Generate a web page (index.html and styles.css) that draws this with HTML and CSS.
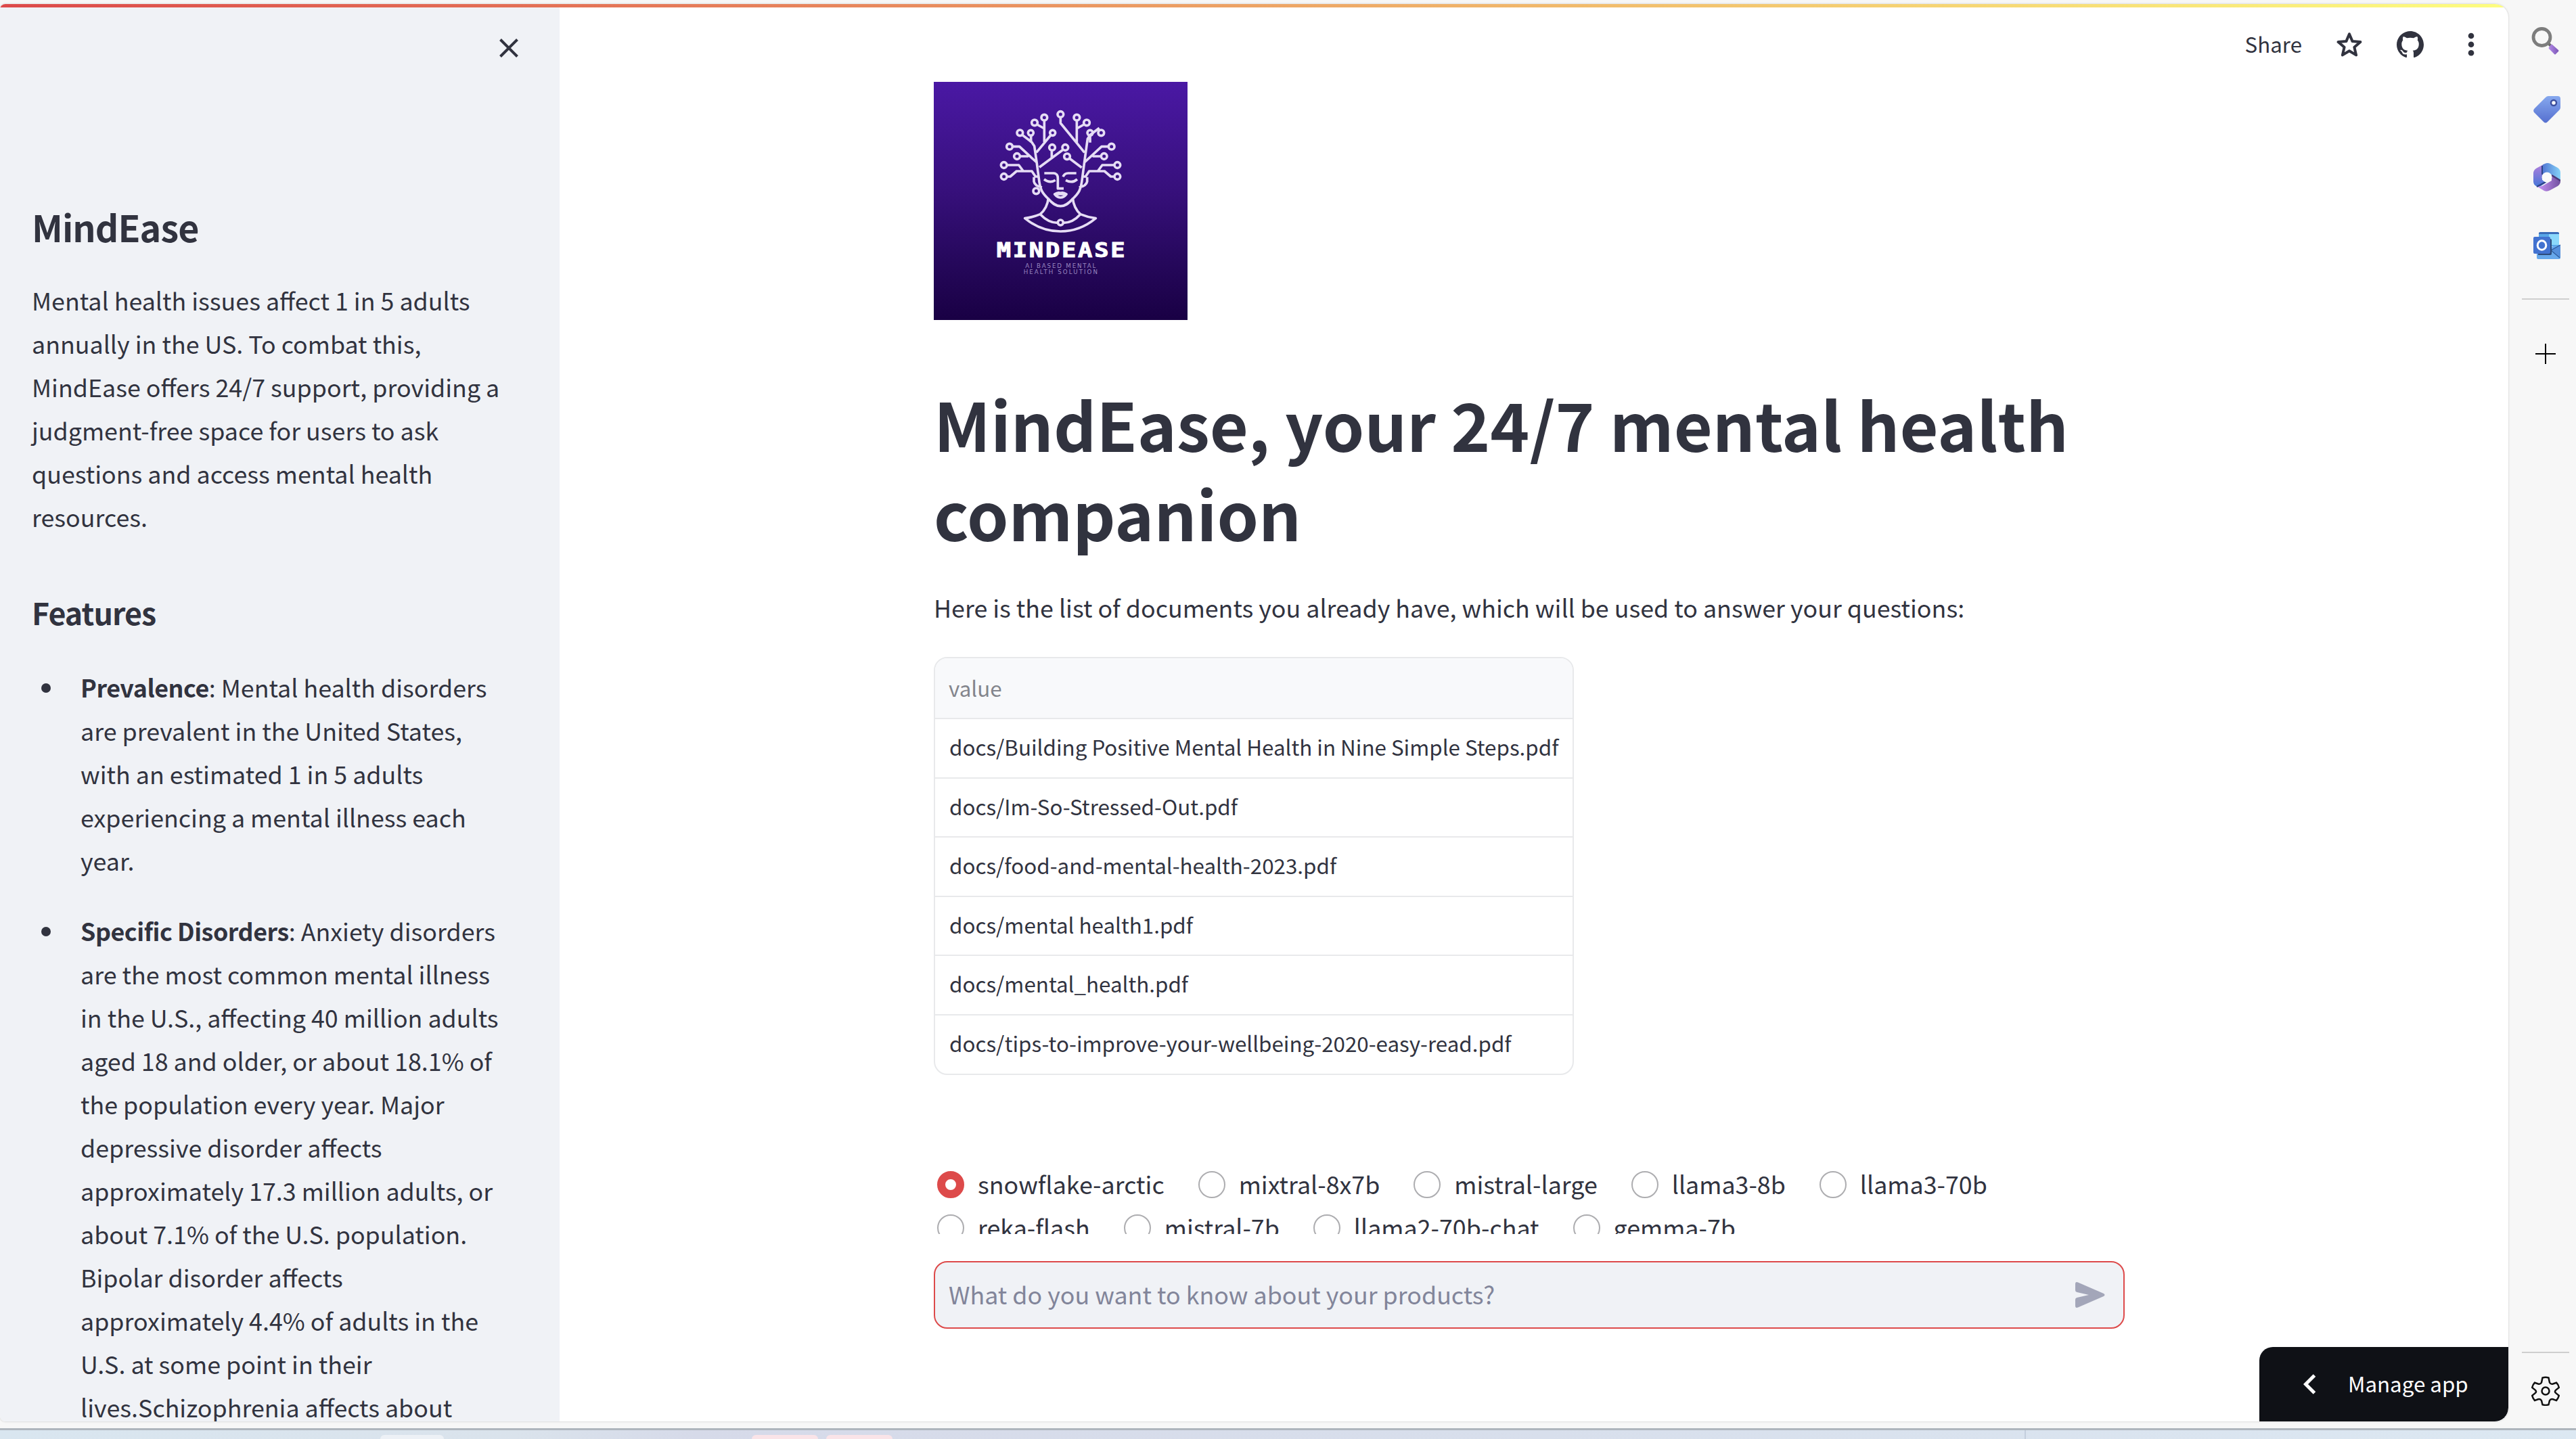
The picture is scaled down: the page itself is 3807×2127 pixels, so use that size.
FILE: index.html
```html
<!DOCTYPE html>
<html lang="en">
<head>
<meta charset="utf-8">
<title>MindEase</title>
<link rel="stylesheet" href="styles.css">
</head>
<body>
<div class="window">
  <div class="page">
    <div class="decoration"></div>
    <aside class="sidebar">
      <div class="sidebar-top">
        <svg class="close" viewBox="0 0 28 28"><path d="M1.5 1.5l25 25M26.5 1.5l-25 25"/></svg>
      </div>
      <h1>MindEase</h1>
      <p>Mental health issues affect 1 in 5 adults<br>annually in the US. To combat this,<br>MindEase offers 24/7 support, providing a<br>judgment-free space for users to ask<br>questions and access mental health<br>resources.</p>
      <h2>Features</h2>
      <ul>
        <li><strong>Prevalence</strong>: Mental health disorders<br>are prevalent in the United States,<br>with an estimated 1 in 5 adults<br>experiencing a mental illness each<br>year.</li>
        <li><strong>Specific Disorders</strong>: Anxiety disorders<br>are the most common mental illness<br>in the U.S., affecting 40 million adults<br>aged 18 and older, or about 18.1% of<br>the population every year. Major<br>depressive disorder affects<br>approximately 17.3 million adults, or<br>about 7.1% of the U.S. population.<br>Bipolar disorder affects<br>approximately 4.4% of adults in the<br>U.S. at some point in their<br>lives.Schizophrenia affects about</li>
      </ul>
    </aside>
    <main class="main">
      <header class="toolbar">
        <span class="share">Share</span>
        <svg class="star" viewBox="0 0 38 38"><path d="M19 3.2l4.6 10.9 11.8 1-9 7.7 2.7 11.6L19 28.2 8.900 34.400l2.700-11.600-9-7.700 11.800-1z"/></svg>
        <svg class="github" viewBox="0 0 16 16"><path fill-rule="evenodd" d="M8 0C3.580 0 0 3.580 0 8c0 3.540 2.290 6.530 5.470 7.590.4.070.55-.17.55-.38 0-.19-.01-.82-.01-1.490-2.010.37-2.530-.49-2.690-.94-.09-.23-.48-.94-.82-1.130-.28-.15-.68-.52-.01-.53.63-.01 1.080.58 1.230.82.72 1.210 1.870.87 2.330.66.07-.52.28-.87.51-1.070-1.780-.2-3.640-.89-3.640-3.950 0-.87.31-1.590.82-2.150-.08-.2-.36-1.020.08-2.120 0 0 .67-.21 2.200.82.64-.18 1.320-.27 2-.27s1.360.09 2 .27c1.530-1.040 2.200-.82 2.200-.82.44 1.100.16 1.920.08 2.120.51.56.82 1.270.82 2.150 0 3.070-1.870 3.750-3.650 3.950.29.25.54.73.54 1.480 0 1.070-.01 1.930-.01 2.200 0 .21.15.46.55.38A8.010 8.010 0 0 0 16 8c0-4.420-3.580-8-8-8z"/></svg>
        <svg class="dots" viewBox="0 0 10 36"><circle cx="5" cy="5" r="4.300"/><circle cx="5" cy="17.700" r="4.300"/><circle cx="5" cy="30.300" r="4.300"/></svg>
      </header>
      <div class="scroll">
        <svg class="logo" viewBox="30 33 1125 1056" preserveAspectRatio="none">
          <defs><linearGradient id="violet" x1="0" y1="0" x2="0" y2="1"><stop offset="0" stop-color="#4a18a4"/><stop offset=".45" stop-color="#37107c"/><stop offset=".75" stop-color="#26085c"/><stop offset="1" stop-color="#190044"/></linearGradient></defs>
          <rect x="30" y="33" width="1125" height="1056" fill="url(#violet)"/>
          <g class="logo-lines">
            <path d="M520 205V300M520 240l-32-18M548 270l-28 34-35 42M461 272v30M422 268l42 32 12 18 10 70 12 90c4 30 12 48 40 74 20 22 34 32 54 32s34-10 54-32c28-26 36-44 40-74l16-120 10-72 12-18 40-30M592 192v24l72 88 34 42M664 205v99M664 240l32-18M723 272v30M380 320h30l76 70M412 363h38M804 320h-30l-76 70M772 363h-38M355 402h52l20 27M355 453h14l28-24h68l16 24h17M829 402h-52l-20 27M829 453h-14l-28-24h-68l-16 24h-17M498 412l105-78M553 338v34M632 373l54 40M474 455v20q4 20 36 26M710 455v20q-4 20-36 26"/>
            <path d="M520 438h42q18 2 18 22v46h26M662 438h-36q-16 0-23 16M519 465q26 20 50 4M615 469q28 16 51-4M566 531q14-10 26-5 12-5 26 5-12 15-26 15t-26-15zM574 531h36M538 548q-4 44-36 72-34 14-68 18 72 58 158 58t156-58q-34-4-68-18-30-28-34-72M502 620q36 38 77 38M605 658q41 0 75-38"/>
            <circle cx="520" cy="191" r="13"/><circle cx="477" cy="214" r="13"/><circle cx="592" cy="177" r="13"/><circle cx="664" cy="191" r="13"/><circle cx="708" cy="214" r="13"/><circle cx="412" cy="259" r="13"/><circle cx="460" cy="259" r="12"/><circle cx="557" cy="259" r="12"/><circle cx="723" cy="259" r="12"/><circle cx="772" cy="259" r="13"/><circle cx="366" cy="320" r="13"/><circle cx="399" cy="363" r="13"/><circle cx="555" cy="324" r="13"/><circle cx="613" cy="324" r="13"/><circle cx="621" cy="364" r="13"/><circle cx="818" cy="320" r="13"/><circle cx="785" cy="363" r="13"/><circle cx="341" cy="402" r="13"/><circle cx="341" cy="453" r="13"/><circle cx="844" cy="402" r="13"/><circle cx="844" cy="453" r="13"/><circle cx="484" cy="517" r="13"/><circle cx="592" cy="657" r="12"/>
          </g>
          <text class="logo-name" x="308" y="810" textLength="578" lengthAdjust="spacingAndGlyphs">MINDEASE</text>
          <text class="logo-tag" x="436" y="858" textLength="312">AI BASED MENTAL</text>
          <text class="logo-tag" x="428" y="886" textLength="328">HEALTH SOLUTION</text>
        </svg>
        <h1 class="title">MindEase, your 24/7 mental health<br>companion</h1>
        <p class="intro">Here is the list of documents you already have, which will be used to answer your questions:</p>
        <div class="table">
          <div class="cell head">value</div>
          <div class="cell">docs/Building Positive Mental Health in Nine Simple Steps.pdf</div>
          <div class="cell">docs/Im-So-Stressed-Out.pdf</div>
          <div class="cell">docs/food-and-mental-health-2023.pdf</div>
          <div class="cell">docs/mental health1.pdf</div>
          <div class="cell">docs/mental_health.pdf</div>
          <div class="cell">docs/tips-to-improve-your-wellbeing-2020-easy-read.pdf</div>
        </div>
        <div class="radios">
          <label><i class="on"></i><span>snowflake-arctic</span></label><label><i></i><span>mixtral-8x7b</span></label><label><i></i><span>mistral-large</span></label><label><i></i><span>llama3-8b</span></label><label><i></i><span>llama3-70b</span></label>
        </div>
        <div class="radios">
          <label><i></i><span>reka-flash</span></label><label><i></i><span>mistral-7b</span></label><label><i></i><span>llama2-70b-chat</span></label><label><i></i><span>gemma-7b</span></label>
        </div>
      </div>
      <div class="chat">
        <span>What do you want to know about your products?</span>
        <svg class="send" viewBox="0 0 44 38"><path d="M0 3Q0-1 4 .500L42 17q3 2 0 4L4 37.500q-4 1.500-4-2.500V26q0-2.500 2.500-3L20 19 2.500 15Q0 14.500 0 12z"/></svg>
      </div>
      <div class="manage">
        <svg class="chevron" viewBox="0 0 19 30"><path d="M16.500 2L3.500 15l13 13"/></svg>
        <span>Manage app</span>
      </div>
    </main>
  </div>
  <nav class="rail">
    <svg class="search" viewBox="0 0 42 42"><defs><linearGradient id="handle"><stop offset="0" stop-color="#b48be8"/><stop offset="1" stop-color="#7a55b5"/></linearGradient></defs><path d="M25 24l4 4" stroke="#6b6b6b" stroke-width="4"/><circle cx="15.500" cy="15" r="12.500" fill="none" stroke="#7d7d7d" stroke-width="4.800"/><path d="M31 26l9 8q1 1 0 2l-4 4q-1 1-2 0l-8-8q-1-1 0-2l3-4q1-1 2 0z" fill="url(#handle)"/></svg>
    <svg class="tag" viewBox="0 0 40 40"><defs><linearGradient id="blue" x1="0" y1="0" x2="0" y2="1"><stop offset="0" stop-color="#86a8ee"/><stop offset="1" stop-color="#5670d0"/></linearGradient></defs><path d="M22 0h14q4 0 4 4v13q0 2-2 4L21 38q-3 3-6 0L1 24q-2-3 1-6L18 2q2-2 4-2z" fill="url(#blue)"/><circle cx="30" cy="10" r="4" fill="#fff" stroke="#3d4f9e" stroke-width="2.500"/></svg>
    <svg class="m365" viewBox="0 0 40 42"><defs><linearGradient id="ma" x1="0" y1="0" x2="0" y2="1"><stop offset="0" stop-color="#b27fdc"/><stop offset="1" stop-color="#4576d8"/></linearGradient><linearGradient id="mb"><stop offset="0" stop-color="#4f74d2"/><stop offset="1" stop-color="#86d3f8"/></linearGradient><linearGradient id="mc"><stop offset="0" stop-color="#c793f7"/><stop offset="1" stop-color="#71509f"/></linearGradient></defs><path d="M15 2L4 8q-4 3-4 7v12q0 5 4 7 3 2 7 0l9-6-7-3V17l2-4z" fill="url(#ma)"/><path d="M13 18V5q0-3 4-4 4-2 8 0l11 6q4 3 4 7v12l-13-8-7-4z" fill="url(#mb)"/><path d="M40 25v2q0 4-4 7l-11 6q-5 3-9 1L6 35l7-1 14-8v-9z" fill="url(#mc)"/><path d="M13 4v13M5 35l13-7" stroke="#2d4487" stroke-width="2"/><path d="M27 18l13 8" stroke="#4a3a78" stroke-width="2.500"/><circle cx="20" cy="21" r="7.500" fill="#fafafa"/></svg>
    <svg class="outlook" viewBox="0 0 40 40"><path d="M8 1h30v20H8z" fill="#58a7e8"/><path d="M23 3h15v16H23z" fill="#8bd8fb"/><path d="M8 2q0-2 2-2h26q2 0 2 2v1H8z" fill="#396cb8"/><path d="M5 26l35-7v19q0 2-2 2H7q-2 0-2-2z" fill="#67a8eb"/><path d="M40 19v19L26 26z" fill="#558fdb"/><path d="M26 27l14-8M26 27l13 11" stroke="#2d5a9c" stroke-width="1.300"/><path d="M7 10h18q2 0 2 2v20q0 2-2 2H7z" fill="#2e4b78"/><rect y="7" width="25" height="25" rx="2" fill="#4272d0"/><ellipse cx="12.500" cy="19.500" rx="6.300" ry="6.800" fill="none" stroke="#fff" stroke-width="3"/></svg>
    <hr>
    <svg class="plus" viewBox="0 0 30 30"><path d="M0 15h30M15 0v30"/></svg>
    <hr class="low">
    <svg class="gear" viewBox="0 0 42 44"><path d="M16.500 2.500q4.500-1.500 9 0l1.500 7q1.500 3 5 2l5-1.800q3 3 3.800 7.200l-4.800 4q-2 2 0 4l4.800 4q-1 4-3.800 7.200l-5-1.800q-3.500-1-5 2l-1.500 6q-4.500 1.200-9 0l-1.500-6q-1.500-3-5-2L5 36.100Q2.200 33 1.200 28.900l4.800-4q2-2 0-4l-4.800-4Q2.200 12.700 5 9.700l5 1.800q3.500 1 5-2z"/><circle cx="21" cy="22" r="5.500"/></svg>
  </nav>
</div>
<footer class="taskbar"><i class="tile"></i><i class="pink"></i><i class="pink"></i><i class="tick"></i></footer>
</body>
</html>
```
FILE: styles.css
```css
* { box-sizing: border-box; }
body {
  margin: 0; width: 3807px; height: 2127px; overflow: hidden;
  display: flex; flex-direction: column;
  background: #f7f7f7; color: #31333f;
  font-family: "Noto Sans CJK SC", "Noto Sans", sans-serif;
  font-size: 35.8px; line-height: 64px; white-space: nowrap;
}
h1, h2, p, ul { margin: 0; padding: 0; font-weight: inherit; }
svg { display: block; flex: none; }
.window { display: flex; height: 2111px; padding-top: 6px; }
.page {
  position: relative; display: flex; width: 3707px; height: 2095px;
  background: #fff; border-radius: 8px 20px 20px 8px; overflow: hidden;
  box-shadow: 0 0 3px #c4c4c4;
}
.decoration { position: absolute; inset: 0 0 auto; height: 5px; z-index: 2; background: linear-gradient(90deg, #dd4a4a, #fdfd80); }

.sidebar { width: 827px; height: 2095px; background: #f0f2f6; overflow: hidden; padding: 0 47px; }
.sidebar-top { height: 293px; display: flex; justify-content: flex-end; padding: 51px 14px 0 0; }
.close { width: 28px; height: 28px; stroke: #31333f; stroke-width: 4; }
.sidebar h1 { font-size: 53.7px; line-height: 72px; font-weight: 600; letter-spacing: -.9px; margin-bottom: 40px; }
.sidebar h2 { font-size: 44.7px; line-height: 60px; font-weight: 600; letter-spacing: -.9px; margin: 80px 0 48px; }
.sidebar ul { list-style: none; display: flex; flex-direction: column; gap: 40px; }
.sidebar li { position: relative; padding-left: 72px; }
.sidebar li::before { content: ""; position: absolute; left: 14px; top: 27px; width: 14px; height: 14px; border-radius: 50%; background: #31333f; }
strong { font-weight: 600; letter-spacing: -.45px; }

.main { position: relative; flex: 1; display: flex; flex-direction: column; padding-left: 553px; }
.toolbar { position: absolute; top: 28px; right: 50px; height: 64px; display: flex; align-items: center; font-size: 31.3px; }
.share { margin: -2px 51px 0 0; }
.star { width: 38px; height: 38px; margin-right: 51px; fill: none; stroke: #31333f; stroke-width: 4; stroke-linejoin: round; }
.github { width: 40px; height: 40px; margin-right: 65px; fill: #31333f; }
.dots { width: 10px; height: 36px; fill: #31333f; }
.scroll { height: 1818px; padding-top: 115px; overflow: hidden; }
.logo { width: 375px; height: 352px; }
.logo-lines { fill: none; stroke: #e6ddf5; stroke-width: 11; stroke-linejoin: round; }
.logo-name { font: 700 92px "DejaVu Sans Mono", monospace; letter-spacing: 7px; fill: #fff; stroke: #fff; stroke-width: 3; }
.logo-tag { font: 400 26px "DejaVu Sans", sans-serif; fill: #9a88c0; }
.title { font-size: 98.4px; line-height: 132px; font-weight: 700; margin-top: 86px; }
.intro { margin: 42px 0; }
.table { width: 946px; height: 618px; border: 2px solid #e8e9eb; border-radius: 20px; overflow: hidden; font-size: 31.35px; }
.cell { height: 87.5px; padding: 0 0 4px 21px; line-height: 82px; border-top: 2px solid #e8e9eb; }
.cell.head { height: 88px; background: #f8f9fb; color: #83858c; border-top: 0; line-height: 87px; padding: 0 0 0 20px; }
.radios { display: flex; gap: 50px; padding-left: 5px; }
.table + .radios { margin-top: 130px; }
.radios label { display: flex; align-items: center; gap: 20px; height: 64px; }
.radios i { width: 40px; height: 40px; border-radius: 50%; border: 2.500px solid #adadb0; }
.radios i.on { border: 12.500px solid #dd4a4a; }
.radios span { margin-top: -5px; }
.chat {
  margin-top: 40px; width: 1760px; height: 100px; padding: 0 27px 0 20px;
  display: flex; align-items: center; justify-content: space-between;
  background: #f0f2f6; border: 2px solid #dd4a4a; border-radius: 20px; color: #82859a;
}
.chat span { margin-top: -5px; }
.send { width: 44px; height: 38px; fill: #a3a6b9; }
.manage {
  position: absolute; right: 0; bottom: 0; width: 368px; height: 110px; padding-left: 65px;
  display: flex; align-items: center; gap: 47px;
  background: #0f1116; color: #fff; border-radius: 20px 0 20px 0; font-size: 31.3px;
}
.manage span { margin-top: -2px; }
.chevron { width: 19px; height: 30px; fill: none; stroke: #fff; stroke-width: 5; }

.rail { width: 100px; display: flex; flex-direction: column; align-items: center; padding: 34px 0 0 10px; }
.search { width: 42px; height: 42px; }
.tag { width: 40px; height: 40px; margin: 60px 0 0 4px; }
.m365 { width: 40px; height: 42px; margin: 59px 0 0 4px; }
.outlook { width: 40px; height: 40px; margin: 60px 0 58px 4px; }
.rail hr { width: 70px; height: 2px; margin: 0; border: 0; background: #cfcfcf; }
.plus { width: 30px; height: 30px; margin: 65px 0 1460px; stroke: #000; stroke-width: 2; }
.gear { width: 42px; height: 44px; margin-top: 34px; fill: none; stroke: #111; stroke-width: 2.500; }

.taskbar {
  height: 16px; border-top: 3px solid #aeb5bd; display: flex; padding: 7px 0 0 562px;
  background: linear-gradient(90deg, #d9e6f0, #dae3ec 20%, #d6dae9 27%, #d8dfec 60%, #dce8f2);
}
.tile { width: 94px; height: 6px; border-radius: 8px 8px 0 0; background: #edf1f6; margin-right: 455px; }
.pink { width: 98px; height: 6px; border-radius: 8px 8px 0 0; background: #fae4e8; margin-right: 12px; }
.tick { width: 2px; height: 13px; margin: -7px 0 0 1661px; background: #c3cedd; }
```
